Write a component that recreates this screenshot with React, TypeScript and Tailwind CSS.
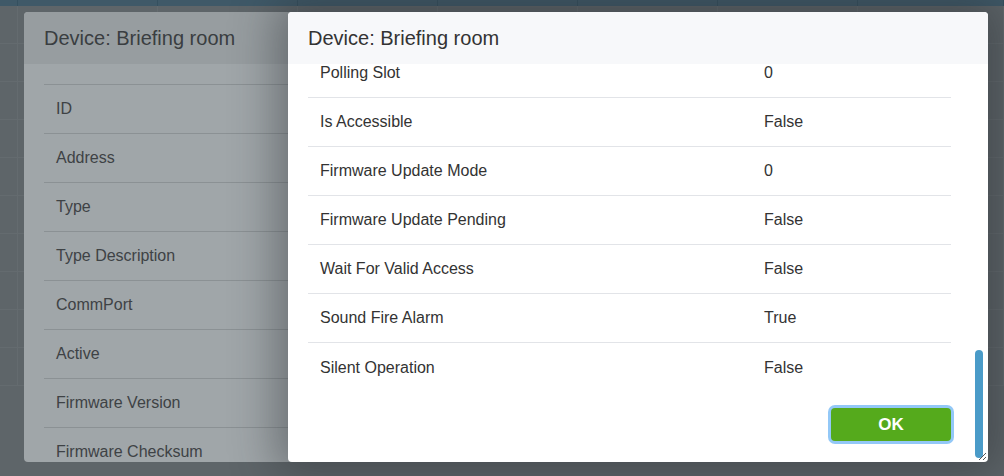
import React from "react";

const backRows = [
  "ID",
  "Address",
  "Type",
  "Type Description",
  "CommPort",
  "Active",
  "Firmware Version",
  "Firmware Checksum",
];

const frontRows: [string, string][] = [
  ["Polling Slot", "0"],
  ["Is Accessible", "False"],
  ["Firmware Update Mode", "0"],
  ["Firmware Update Pending", "False"],
  ["Wait For Valid Access", "False"],
  ["Sound Fire Alarm", "True"],
  ["Silent Operation", "False"],
];

const cols = [18, 140, 140, 140, 140, 140, 140, 146];

export default function App() {
  return (
    <div
      className="relative w-[1004px] h-[476px] overflow-hidden bg-[#5e6569]"
      style={{ fontFamily: '"Liberation Sans", Arial, sans-serif' }}
    >
      {/* background page (dimmed) */}
      <div className="flex flex-col">
        <div className="flex h-[6px] bg-[#3f5968]">
          {cols.map((w, i) => (
            <div key={i} className="h-full border-r border-[#35505f]" style={{ width: w }} />
          ))}
        </div>
        <div className="flex flex-col">
          {Array.from({ length: 10 }).map((_, i) => (
            <div key={i} className="flex h-[38px] border-b border-[#646b6f]">
              {cols.map((w, j) => (
                <div key={j} className="h-full border-r border-[#646b6f]" style={{ width: w }} />
              ))}
            </div>
          ))}
        </div>
      </div>

      {/* back modal (dimmed) */}
      <div className="absolute left-[24px] top-[12px] w-[300px] h-[450px] rounded-[4px] overflow-hidden bg-[#a0a6a9] flex flex-col">
        <div className="h-[52px] shrink-0 bg-[#979da0] px-[20px] flex items-center text-[20px] text-[#3a3e41]">
          Device: Briefing room
        </div>
        <div className="pt-[20px] pl-[20px]">
          {backRows.map((r) => (
            <div
              key={r}
              className="h-[49px] border-t border-[#8b9194] pl-[12px] flex items-center text-[16px] text-[#3e4245]"
            >
              {r}
            </div>
          ))}
        </div>
      </div>

      {/* front modal */}
      <div className="absolute left-[288px] top-[12px] w-[700px] h-[450px] rounded-[4px] bg-white overflow-hidden shadow-[0_0_45px_12px_rgba(40,45,48,0.45)] flex flex-col">
        <div className="relative z-10 h-[52px] shrink-0 bg-[#f7f8fa] px-[20px] flex items-center text-[20px] text-[#333]">
          Device: Briefing room
        </div>
        <div className="relative flex-1 overflow-hidden">
          <div className="-mt-[15px] pl-[20px] pr-[37px]">
            {frontRows.map(([k, v], i) => (
              <div
                key={k}
                className={
                  "h-[49px] grid grid-cols-[444px_1fr] items-center px-[12px] text-[16px] text-[#333] " +
                  (i < frontRows.length - 1 ? "border-b border-[#e2e4e8]" : "")
                }
              >
                <span>{k}</span>
                <span>{v}</span>
              </div>
            ))}
            <div className="flex justify-end pt-[16px]">
              <button className="w-[120px] h-[33px] rounded-[4px] bg-[#55aa1c] text-white text-[17px] font-bold ring-[3px] ring-[#93c8f7] flex items-center justify-center">
                OK
              </button>
            </div>
          </div>
          {/* scrollbar thumb */}
          <div className="absolute right-[5px] top-[286px] w-[8px] h-[108px] rounded-full bg-[#4a9bc8]" />
          {/* resize handle */}
          <svg className="absolute right-[1px] bottom-[1px]" width="10" height="10" viewBox="0 0 10 10">
            <line x1="9" y1="2" x2="2" y2="9" stroke="#555" strokeWidth="1" />
            <line x1="9" y1="6" x2="6" y2="9" stroke="#555" strokeWidth="1" />
          </svg>
        </div>
      </div>
    </div>
  );
}
